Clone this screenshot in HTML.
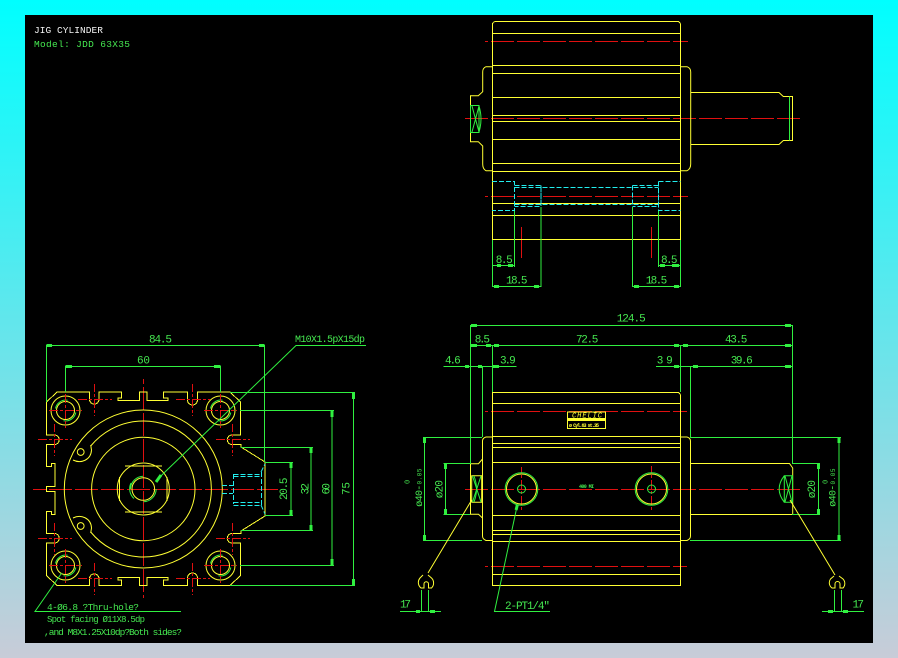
<!DOCTYPE html>
<html><head><meta charset="utf-8"><style>
html,body{margin:0;padding:0;width:898px;height:658px;overflow:hidden}
body{background:linear-gradient(180deg,#00ffff 0,#c8ccd8 100%)}
svg{position:absolute;left:0;top:0;display:block}
text{font-family:"Liberation Mono","DejaVu Sans Mono",monospace;fill:#45e850;font-size:11px}
.y{fill:none;stroke:#ffff33;stroke-width:1;shape-rendering:crispEdges}
.ys{fill:none;stroke:#ffff33;stroke-width:1}
.g{fill:none;stroke:#30f040;stroke-width:1;shape-rendering:crispEdges}
.gs{fill:none;stroke:#30f040;stroke-width:1}
.c{fill:none;stroke:#22eeee;stroke-width:1;stroke-dasharray:5 2}
.a{fill:none;stroke:#30f040;stroke-width:3;shape-rendering:crispEdges}
.rh{fill:url(#ph)}.rv{fill:url(#pv)}.rh2{fill:url(#ph2)}.rv2{fill:url(#pv2)}
</style></head><body>
<svg width="898" height="658" viewBox="0 0 898 658" xmlns="http://www.w3.org/2000/svg">
<defs>
<pattern id="ph" patternUnits="userSpaceOnUse" width="26" height="1"><rect width="20" height="1" fill="#e01010"/><rect x="23" width="3" height="1" fill="#e01010"/></pattern>
<pattern id="pv" patternUnits="userSpaceOnUse" width="1" height="26"><rect width="1" height="20" fill="#e01010"/><rect y="23" width="1" height="3" fill="#e01010"/></pattern>
<pattern id="ph2" patternUnits="userSpaceOnUse" width="16" height="1"><rect width="9" height="1" fill="#e01010"/><rect x="11" width="3" height="1" fill="#e01010"/></pattern>
<pattern id="pv2" patternUnits="userSpaceOnUse" width="1" height="16"><rect width="1" height="9" fill="#e01010"/><rect y="11" width="1" height="3" fill="#e01010"/></pattern>
<g id="bolt"><g transform="translate(.5,.5)"><circle class="ys" r="14.5"/><circle class="ys" r="9"/><path class="gs" d="M-10,-2A10.5 10.5 0 0 1 2,-10.3M10.3,2A10.5 10.5 0 0 1 -2,10.3"/></g><rect class="rh2" x="-16" y="0" width="33" height="1"/><rect class="rv2" x="0" y="-17" width="1" height="35"/></g>
<g id="cross"><rect class="rh2" x="-17" y="0" width="35" height="1"/><rect class="rv2" x="0" y="-15" width="1" height="32"/></g>
</defs>
<rect x="25" y="15" width="848" height="628" fill="#000"/>

<text x="34" y="33" style="fill:#f4f4f4;font-size:9.5px" textLength="69">JIG CYLINDER</text>
<text x="34" y="47" style="font-size:9.5px" textLength="96">Model: JDD 63X35</text>

<!-- LEFT VIEW -->
<rect class="rh" x="33" y="489" width="245" height="1"/><rect class="rv" x="143" y="379" width="1" height="219"/>
<path class="y" d="M46.5,402L57,392H89.5V400A4.8 4.8 0 0 0 99,400V392H121.7V398H118V400.5H139.5V392H147V400.5H168V398H163.5V392H187.5V400A4.8 4.8 0 0 0 197.5,400V392H230L240.5,402V435H232A4.7 4.7 0 0 0 232,444.5H241V447L265,462V516L241,531V533.5H232A4.7 4.7 0 0 0 232,543H240.5V575.5L230,585.5H197.5V578A4.8 4.8 0 0 0 187.5,578V585.5H163.5V580H168V577.5H147V585.5H139.5V577.5H118V580H121.7V585.5H99V578A4.8 4.8 0 0 0 89.5,578V585.5H57L46.5,575.5V543H54.5A4.7 4.7 0 0 0 54.5,533.5H46.5V511.3H51.7V514.7H55V491.5H46.5V486.5H55V463.3H51.7V466.7H46.5V444.5H54.5A4.7 4.7 0 0 0 54.5,435H46.5Z"/>
<circle class="ys" cx="143.3" cy="489" r="79"/>
<path class="ys" d="M90.7,446A68 68 0 1 1 90.7,532"/>
<circle class="ys" cx="143.3" cy="489" r="51.7"/>
<circle class="ys" cx="143.3" cy="489" r="26"/>
<path class="y" d="M125,466H162M125,512H162M119.5,477V501M167,477V501"/>
<path class="ys" d="M73,460C81,464 91,460 91.5,450L90.7,445M73,518C81,514 91,518 91.5,528L90.7,533"/>
<circle class="ys" cx="80.7" cy="452" r="3.4"/>
<circle class="ys" cx="80.7" cy="526" r="3.4"/>
<circle class="ys" cx="143.3" cy="489" r="11.3"/>
<path class="gs" d="M130.5,489A13 13 0 0 1 143,476.2M156.2,489A13 13 0 0 1 143.5,501.8M131,483A13 13 0 0 0 134,498.5"/>
<use href="#bolt" x="65" y="410"/><use href="#bolt" x="220" y="410"/>
<use href="#bolt" x="65" y="565"/><use href="#bolt" x="220" y="565"/>
<use href="#cross" x="94" y="399"/><use href="#cross" x="192" y="399"/>
<use href="#cross" x="94" y="578"/><use href="#cross" x="192" y="578"/>
<use href="#cross" x="54" y="439"/><use href="#cross" x="54" y="538"/>
<use href="#cross" x="232" y="439"/><use href="#cross" x="232" y="538"/>
<path class="c" d="M-2000,-2000h5M233.5,474.5H261M233.5,476.500H261M233.5,474V504M233.5,502.500H261M233.5,505.500H261M261.500,472V505M222,485.500H233M222,493.500H233M261,472L265,464M261,505L265,514"/>
<!-- left dims -->
<path class="g" d="M46.5,345.5H264.5M46.5,345V402M264.5,345V462M65.5,366.5H220.5M65.5,366V392M220.5,366V392"/>
<path class="g" d="M230,392.5H355M230,585.5H355M353.5,392V585.5M240,410.5H334M240,565.5H334M332,410.5V565.5M241,447.5H313M241,530.5H313M311,447.5V530.5M265,462.5H293M265,515.5H293M291,462.5V515.5"/>
<path class="a" d="M46.5,345.5H52M259,345.5H264.5M65.5,366.5H72M214,366.5H220.5M353.5,393V399M353.5,579V585M332,411V417M332,559V565M311,448V453M311,525V530M291,463V468M291,510V515"/>
<path class="gs" d="M156.7,480L296,345.5H366M61.7,573L35,611.5H181"/>
<path d="M156,482l5,-7" stroke="#30f040" stroke-width="3" fill="none"/>
<text x="149" y="342.5" textLength="23">84.5</text>
<text x="137" y="363.5" textLength="13">60</text>
<text x="295" y="342" textLength="70" style="font-size:10px">M10X1.5pX15dp</text>
<text transform="translate(349.500,495) rotate(-90)" textLength="13">75</text>
<text transform="translate(329.500,494.500) rotate(-90)" textLength="11.500">60</text>
<text transform="translate(308.500,494.500) rotate(-90)" textLength="11.500">32</text>
<text transform="translate(287,500) rotate(-90)" textLength="22.500">20.5</text>
<text x="47" y="610" textLength="92" style="font-size:9.5px">4-Ø6.8 ?Thru-hole?</text>
<text x="47" y="622" textLength="98" style="font-size:9px">Spot facing Ø11X8.5dp</text>
<text x="44" y="635" textLength="138" style="font-size:9.5px">,and M8X1.25X10dp?Both sides?</text>

<!-- TOP RIGHT VIEW -->
<rect class="rh" x="485" y="41" width="203" height="1"/><rect class="rh" x="464" y="118" width="336" height="1"/><rect class="rh" x="485" y="196" width="203" height="1"/>
<rect x="521" y="227" width="1" height="31" fill="#e01010"/><rect x="651" y="227" width="1" height="31" fill="#e01010"/>
<path class="y" d="M492.5,25Q492.5,21.5 496,21.5H677Q680.5,21.5 680.5,25V239.5H492.5ZM492,33.5H680M492,65.5H680M492,73.5H680M492,97.5H680M492,115.5H680M492,121.5H680M492,139.5H680M492,163.5H680M492,171.5H680M492,203.5H680M492,215.5H680"/>
<path class="ys" d="M492.5,66.7H486Q482.7,68 482.7,72V91.7L478.3,95.7H470.5V141.7H478.3L482.7,146V164Q482.7,169 486,170.7H492.5M680.5,66.7H687Q690.7,68 690.7,72V164Q690.7,169 687,170.7H680.5M690.7,92.5H779L783.3,96.5H792.5V140.5H783.3L779,144.5H690.7"/>
<path class="g" d="M470.5,105.5H479V132.5H470.5ZM789.5,96.5V140.5"/>
<path class="gs" d="M472,106L479,132M479,106L472,132M479,106Q483,119 479,132"/>
<path class="c" d="M-2000,-2000h5M492,181.5H514.5V210.5H492M514.5,185.5H541V206.5H514.5M514.5,187.5H658M514.5,204.5H658M632.5,185.5H658.5V206.5H632.5M658.5,181.5H680.5M658.5,181.5V210.5H680.5M541,185.5V206.5M632.5,185.5V206.5"/>
<path class="g" d="M514.5,211V267M541,207V287M492.5,240V287M632.5,207V287M658.5,211V267M680.5,240V287M492.5,265.5H514.5M658.5,265.5H680.5M492.5,286.5H541M632.5,286.5H680.5"/>
<path class="a" d="M497,265.5H501M508,265.5H513M660,265.5H665M672,265.5H679M494,286.5H499M534,286.5H539M634,286.5H639M674,286.5H679"/>
<text x="495.7" y="263" textLength="17">8.5</text>
<text x="661" y="263" textLength="16.500">8.5</text>
<text x="506" y="283.500" textLength="21.500">18.5</text>
<text x="645.700" y="283.500" textLength="21.500">18.5</text>

<!-- BOTTOM RIGHT VIEW -->
<rect class="rh" x="463" y="489" width="337" height="1"/><rect class="rh" x="485" y="411" width="202" height="1"/><rect class="rh" x="485" y="566" width="202" height="1"/>
<rect class="rv2" x="521" y="467" width="1" height="43"/><rect class="rv2" x="651" y="466" width="1" height="44"/>
<path class="y" d="M492.500,392.500H677Q680.500,392.500 680.500,396V585.500H492.500ZM492,403.500H680M492,436.500H680M492,443.500H680M492,447.500H680M492,462.500H680M492,515.500H680M492,530.500H680M492,534.500H680M492,541.500H680M492,574.500H680"/>
<path class="ys" d="M492.500,437H486Q482.500,438 482.500,441V536Q482.500,539 486,540.500H492.500M680.500,437H687Q690.500,438 690.500,441V536Q690.500,539 687,540.500H680.500M482.500,459L478.500,463.700H470.500V514.300H478.500L482.500,518M690.500,463.500H789.500L792.700,468V514.500H690.500"/>
<path class="ys" d="M471.700,475.700H481.700V502.300H471.700Z"/>
<path class="gs" d="M472.500,476L481,502M481,476L472.500,502M474,476Q479,489 474,502"/>
<path class="gs" d="M784.300,475.700H792.500V502.300H784.300ZM785,476L792,502M792,476L785,502M784.300,475.700Q774,489 784.300,502.300"/>
<circle class="ys" cx="521.500" cy="489" r="15"/><circle class="gs" cx="521.500" cy="489" r="16.300"/><circle class="gs" cx="521.500" cy="489" r="4"/>
<circle class="ys" cx="651.500" cy="489" r="15"/><circle class="gs" cx="651.500" cy="489" r="16.300"/><circle class="gs" cx="651.500" cy="489" r="4"/>
<path class="y" d="M567.700,412H605.700V428.300H567.700Z"/>
<rect x="567.700" y="418" width="38" height="3" fill="#ffff33"/>
<text x="572" y="417.500" textLength="30" style="fill:#ffff33;font-size:7px;font-style:italic">CHELIC</text>
<text x="569" y="427" textLength="30" style="fill:#ffff33;font-size:5px;font-weight:bold">ø Cyl.63 st.35</text>
<text x="579" y="488" textLength="15" style="font-size:5px;font-weight:bold">400 MI</text>
<path class="g" d="M470.500,325.500H792.500M470.500,325V464M792.500,325V464M470.500,345.500H792.500M492.500,345V392M680.500,345V392M443.500,366.500H516.500M656,366.500H792.500M482.500,366V437M690.500,366V437"/>
<path class="g" d="M423,437.500H482M423,540.500H482M424.500,437V540.500M443.500,463.500H470M443.500,514.500H470M445.500,463.500V514.500M690,437.500H841M690,540.500H841M839,437V540.500M792,463.500H820M792,514.500H820M818.500,463.500V514.500"/>
<path class="a" d="M471,325.500H477M785,325.500H791M471,345.500H477M486,345.500H491M494,345.500H499M674,345.500H679M683,345.500H688M785,345.500H791M465,366.500H469M478,366.500H482M493,366.500H499M674,366.500H679M693,366.500H698M785,366.500H791M424.500,438V443M424.500,535V540M445.500,464V469M445.500,509V514M839,438V443M839,535V540M818.500,464V469M818.500,509V514"/>
<path class="ys" d="M471.700,500L428,573M790,500L835,575"/>
<path class="ys" d="M423,575L420,578A7 7 0 0 0 421,588H424V584A2.200 2.200 0 0 1 428.500,584V588H431.500A7 7 0 0 0 431.500,578L428,575M834,576L830.500,579A6.500 6.500 0 0 0 832,588H835V584A2.200 2.200 0 0 1 840,584V588H843A6.500 6.500 0 0 0 843,579L839,576"/>
<path class="g" d="M421.500,590V612M428.700,590V612M400,611.500H441M834.500,590V612M841.500,590V612M822,611.500H864"/>
<path class="a" d="M416,611.500H420M430,611.500H435M828,611.500H833M843,611.500H848"/>
<path class="gs" d="M517.300,505L494.500,611.500H550"/>
<path d="M517.300,505l-1.200,5" stroke="#30f040" stroke-width="3" fill="none"/>
<text x="616.700" y="321.700" textLength="29">124.5</text>
<text x="474.700" y="342.300" textLength="15.300">8.5</text>
<text x="576" y="342.300" textLength="22.300">72.5</text>
<text x="725" y="342.300" textLength="22.300">43.5</text>
<text x="445" y="363.300" textLength="15.700">4.6</text>
<text x="500" y="363.300" textLength="15.700">3.9</text>
<text x="656.700" y="363.300" textLength="16">3 9</text>
<text x="730.700" y="363.300" textLength="22">39.6</text>
<text transform="translate(442.500,498.300) rotate(-90)" textLength="18.300">ø20</text>
<text transform="translate(422,506.700) rotate(-90)" textLength="22" style="font-size:10px">ø40-</text>
<text transform="translate(421.500,484.500) rotate(-90)" textLength="16" style="font-size:6px">0.05</text>
<text transform="translate(409.500,484) rotate(-90)" style="font-size:7px">0</text>
<text transform="translate(815,498.300) rotate(-90)" textLength="18.300">ø20</text>
<text transform="translate(835.300,506.700) rotate(-90)" textLength="22" style="font-size:10px">ø40-</text>
<text transform="translate(834.800,484.500) rotate(-90)" textLength="16" style="font-size:6px">0.05</text>
<text transform="translate(827.500,484) rotate(-90)" style="font-size:7px">0</text>
<text x="400" y="607.700" textLength="11">17</text>
<text x="852.500" y="607.700" textLength="11.500">17</text>
<text x="505" y="609" textLength="45">2-PT1/4"</text>
</svg>
</body></html>
